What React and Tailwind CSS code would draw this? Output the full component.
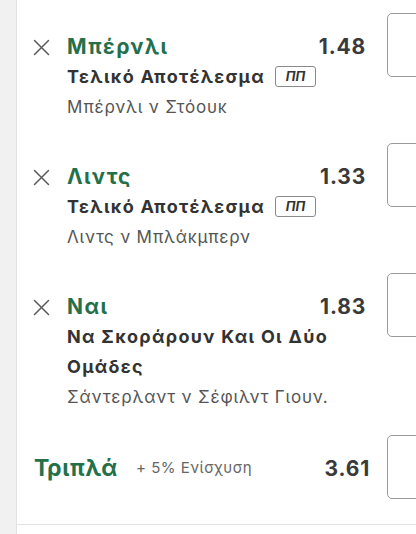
import React from "react";

const items = [
  { sel: "Μπέρνλι", odds: "1.48", market: "Τελικό Αποτέλεσμα", badge: true, desc: "Μπέρνλι ν Στόουκ" },
  { sel: "Λιντς", odds: "1.33", market: "Τελικό Αποτέλεσμα", badge: true, desc: "Λιντς ν Μπλάκμπερν" },
  { sel: "Ναι", odds: "1.83", market: "Να Σκοράρουν Και Οι Δύο Ομάδες", badge: false, desc: "Σάντερλαντ ν Σέφιλντ Γιουν." },
];

function XIcon() {
  return (
    <svg width="17" height="17" viewBox="0 0 17 17" className="shrink-0">
      <path d="M1.5 1.5 L15.5 15.5 M15.5 1.5 L1.5 15.5" stroke="#5a5a5a" strokeWidth="1.5" strokeLinecap="round" />
    </svg>
  );
}

function Box() {
  return <div className="w-[64px] h-[64px] shrink-0 rounded-[5px] border-[1.5px] border-[#9a9a9a] bg-white" />;
}

export default function App() {
  return (
    <div className="w-[416px] h-[534px] overflow-hidden flex bg-white" style={{ fontFamily: "Inter, 'Noto Sans', sans-serif" }}>
      <div className="w-[17px] shrink-0 bg-[#f1f1f1] border-r border-[#e2e2e2]" />
      <div className="flex-1 min-w-0 flex flex-col">
        {items.map((it, i) => (
          <div key={i} className="flex items-start pt-[13px] pb-[8px]">
            <div className="flex-1 min-w-0 flex pt-[19px] pl-[16px]">
              <div className="h-[30px] flex items-center">
                <XIcon />
              </div>
              <div className="ml-[17px] flex-1 min-w-0">
                <div className="h-[30px] flex items-center justify-between">
                  <span className="text-[21px] font-bold text-[#24704b] tracking-[1.4px]">{it.sel}</span>
                  <span className="text-[21px] font-bold text-[#3a3a3a] tracking-[0.8px] -mr-[1px]">{it.odds}</span>
                </div>
                <div className="text-[18px] leading-[30px] font-bold text-[#333] tracking-[1.3px] pr-[10px]">
                  {it.market}
                  {it.badge && (
                    <span className="inline-flex items-center justify-center align-middle ml-[10px] w-[41px] h-[21px] border border-[#8a8a8a] rounded-[3px] text-[13px] font-bold italic text-[#333] tracking-[0px] relative -top-[2px]">
                      ΠΠ
                    </span>
                  )}
                </div>
                <div className="text-[17px] leading-[30px] text-[#555] tracking-[0.8px]">{it.desc}</div>
              </div>
            </div>
            <div className="ml-[22px] -mr-[35px]">
              <Box />
            </div>
          </div>
        ))}
        <div className="flex items-center pt-[15px] pb-[25px] border-b border-[#e3e3e3]">
          <div className="flex-1 flex items-center pl-[17px] pt-[3px]">
            <span className="text-[23px] font-bold text-[#24704b] tracking-[0.7px]">Τριπλά</span>
            <span className="ml-[18px] text-[15px] text-[#666] tracking-[0.5px]">+ 5% Ενίσχυση</span>
            <span className="ml-auto text-[21px] font-bold text-[#3a3a3a] tracking-[0.8px]">3.61</span>
          </div>
          <div className="ml-[17px] -mr-[35px]">
            <Box />
          </div>
        </div>
      </div>
    </div>
  );
}
